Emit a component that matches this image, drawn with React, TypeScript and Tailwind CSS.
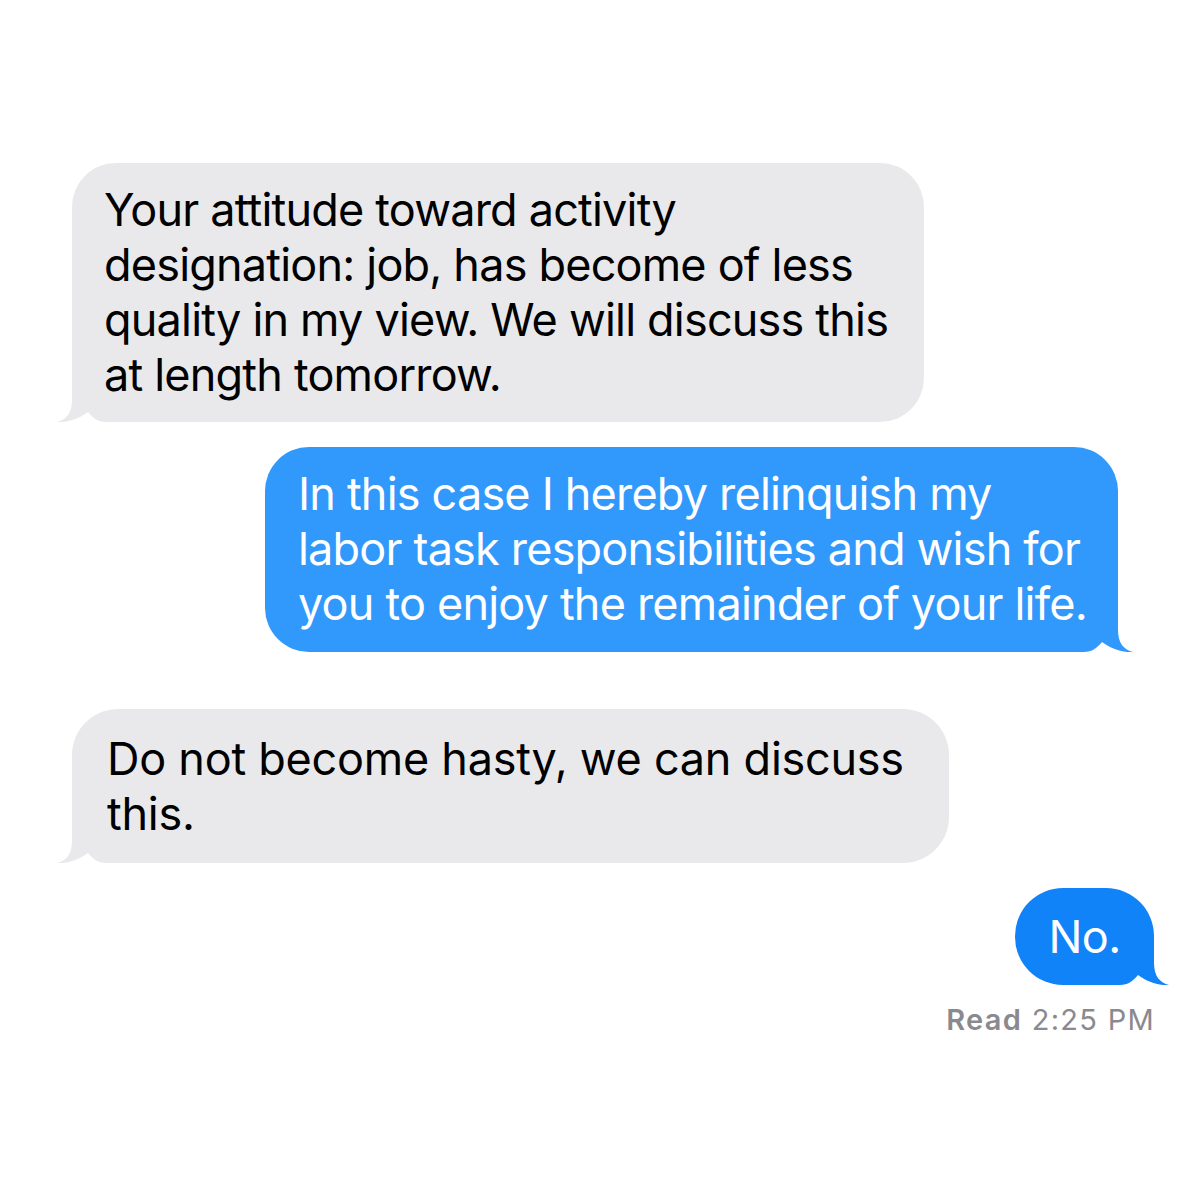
import React from "react";

const font = { fontFamily: "Inter, 'Noto Sans', sans-serif" };

function TailLeft({ color }: { color: string }) {
  return (
    <svg
      className="absolute bottom-0 left-[-20px]"
      width="70"
      height="50"
      viewBox="-20 -50 70 50"
    >
      <path
        d="M 0 -46 L 0 -22 C 0 -9 -6 -2 -15 0 C -4 1 8 -4 16 -10 C 21 -4 26 0 34 0 L 46 0 L 46 -46 Z"
        fill={color}
      />
    </svg>
  );
}

function TailRight({ color }: { color: string }) {
  return (
    <svg
      className="absolute bottom-0 right-[-20px]"
      width="70"
      height="50"
      viewBox="-50 -50 70 50"
    >
      <path
        d="M 0 -46 L 0 -22 C 0 -9 6 -2 15 0 C 4 1 -8 -4 -16 -10 C -21 -4 -26 0 -34 0 L -46 0 L -46 -46 Z"
        fill={color}
      />
    </svg>
  );
}

export default function App() {
  return (
    <div className="w-[1200px] h-[1200px] bg-white relative overflow-hidden" style={font}>
      <div className="flex flex-col pt-[163px]">
        <div className="pl-[72px]">
          <div className="relative w-[852px] h-[259px] rounded-[44px] bg-[#e9e9eb] pl-[32px] pr-[16px] pt-[19px] text-[45px] leading-[55px] text-black tracking-[-0.8px]">
            <TailLeft color="#e9e9eb" />
            <p className="relative">
              Your attitude toward activity
              <br />
              designation: job, has become of less
              <br />
              quality in my view. We will discuss this
              <br />
              at length tomorrow.
            </p>
          </div>
        </div>

        <div className="pl-[265px] mt-[25px]">
          <div className="relative w-[853px] h-[205px] rounded-[44px] bg-[#3199fb] pl-[33px] pr-[12px] pt-[19px] text-[45px] leading-[55px] text-white tracking-[-0.8px]">
            <TailRight color="#3199fb" />
            <p className="relative">
              In this case I hereby relinquish my
              <br />
              labor task responsibilities and wish for
              <br />
              you to enjoy the remainder of your life.
            </p>
          </div>
        </div>

        <div className="pl-[72px] mt-[57px]">
          <div className="relative w-[877px] h-[154px] rounded-[46px] bg-[#e9e9eb] pl-[35px] pr-[16px] pt-[22px] text-[45px] leading-[55px] text-black tracking-[-0.25px]">
            <TailLeft color="#e9e9eb" />
            <p className="relative">
              Do not become hasty, we can discuss
              <br />
              this.
            </p>
          </div>
        </div>

        <div className="flex justify-end pr-[46px] mt-[25px]">
          <div className="relative w-[139px] h-[97px] rounded-[48px] bg-[#1183f8] flex items-center justify-center text-[45px] leading-[55px] text-white tracking-[-0.6px]">
            <TailRight color="#1183f8" />
            <span className="relative">No.</span>
          </div>
        </div>

        <div className="flex justify-end pr-[45px] mt-[18px] text-[29px] leading-[34px] text-[#8a8a8e] tracking-[1.3px]">
          <span>
            <span className="font-semibold">Read</span> 2:25 PM
          </span>
        </div>
      </div>
    </div>
  );
}
